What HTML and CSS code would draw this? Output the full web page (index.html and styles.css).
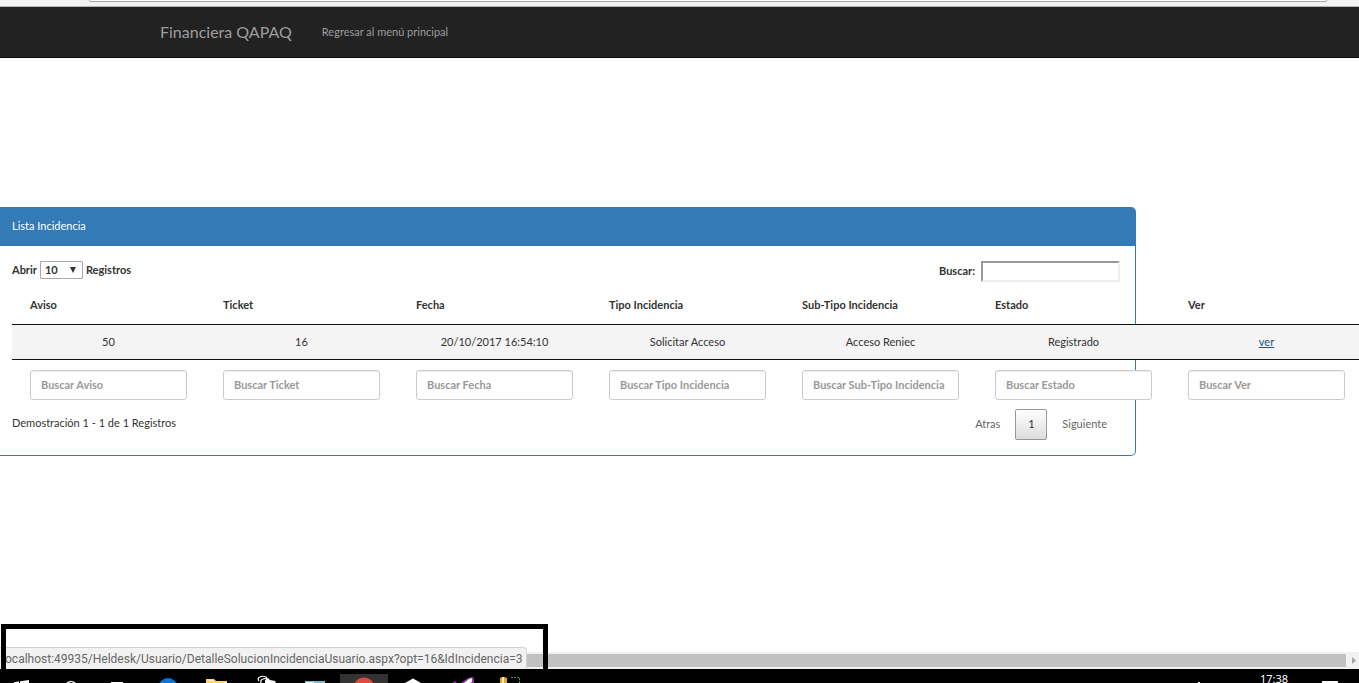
FILE: index.html
```html
<!DOCTYPE html>
<html lang="es">
<head>
<meta charset="utf-8">
<title>Lista Incidencia</title>
<link rel="stylesheet" href="styles.css">
</head>
<body>
<div class="toolbar"><div class="address"></div></div>
<nav class="navbar">
  <a class="brand" href="#">Financiera QAPAQ</a>
  <a class="nav-link" href="#">Regresar al menú principal</a>
</nav>
<main class="content">
  <section class="panel">
    <h1 class="panel-heading">Lista Incidencia</h1>
    <div class="panel-body">
      <div class="controls">
        <label class="length">Abrir
          <span class="select-wrap"><select><option>10</option></select></span>
          Registros</label>
        <label class="search">Buscar: <input type="search"></label>
      </div>
      <table class="grid">
        <thead>
          <tr><th>Aviso</th><th>Ticket</th><th>Fecha</th><th>Tipo Incidencia</th><th>Sub-Tipo Incidencia</th><th>Estado</th><th>Ver</th></tr>
        </thead>
        <tbody>
          <tr><td>50</td><td>16</td><td>20/10/2017 16:54:10</td><td>Solicitar Acceso</td><td>Acceso Reniec</td><td>Registrado</td><td><a href="#">ver</a></td></tr>
        </tbody>
        <tfoot>
          <tr>
            <td><input type="text" placeholder="Buscar Aviso" aria-label="Buscar Aviso"></td>
            <td><input type="text" placeholder="Buscar Ticket" aria-label="Buscar Ticket"></td>
            <td><input type="text" placeholder="Buscar Fecha" aria-label="Buscar Fecha"></td>
            <td><input type="text" placeholder="Buscar Tipo Incidencia" aria-label="Buscar Tipo Incidencia"></td>
            <td><input type="text" placeholder="Buscar Sub-Tipo Incidencia" aria-label="Buscar Sub-Tipo Incidencia"></td>
            <td><input type="text" placeholder="Buscar Estado" aria-label="Buscar Estado"></td>
            <td><input type="text" placeholder="Buscar Ver" aria-label="Buscar Ver"></td>
          </tr>
        </tfoot>
      </table>
      <div class="summary">
        <p class="info">Demostración 1 - 1 de 1 Registros</p>
        <div class="pager">
          <button type="button" class="page">Atras</button>
          <button type="button" class="page current">1</button>
          <button type="button" class="page">Siguiente</button>
        </div>
      </div>
    </div>
  </section>
</main>
<div class="scrollbar">
  <div class="thumb"></div>
  <svg class="arrow" viewBox="0 0 12 17"><path d="M5 5v7l4-3.500z" fill="#a3a3a3"/></svg>
  <div class="callout"></div>
  <div class="status">ocalhost:49935/Heldesk/Usuario/DetalleSolucionIncidenciaUsuario.aspx?opt=16&amp;IdIncidencia=3</div>
  <div class="callout-edge"></div>
</div>
<footer class="taskbar">
  <button class="task first" aria-label="Inicio"><svg viewBox="0 0 48 14"><path d="M17 13.200l5-.900V14h-5zM23 12.200l9-1.200v3h-9z" fill="#fff"/></svg></button>
  <button class="task" aria-label="Buscar"><svg viewBox="0 0 48 14"><circle cx="25" cy="18" r="5.500" fill="none" stroke="#ddd" stroke-width="1.500"/></svg></button>
  <button class="task" aria-label="Vista de tareas"><svg viewBox="0 0 48 14"><path d="M16 13h12v1H16z" fill="#fff"/></svg></button>
  <button class="task" aria-label="Edge"><svg viewBox="0 0 48 14"><circle cx="24" cy="18.500" r="9.500" fill="#0a78d6"/></svg></button>
  <button class="task" aria-label="Explorador"><svg viewBox="0 0 48 14"><path d="M13 10h8l2 2h11v2H13z" fill="#ffd766"/><path d="M16 11h4v1h-4z" fill="#fff3c4"/></svg></button>
  <button class="task" aria-label="Tienda"><svg viewBox="0 0 48 14"><path d="M17 12q-2-3 1-4 3-1.500 6 0l2 3M19 14q-1-3 2-4 2-1 4 0" fill="none" stroke="#fff" stroke-width="1.200"/><path d="M23 11l3-2 2 2 5 1 1 2H23z" fill="#fff"/></svg></button>
  <button class="task" aria-label="Equipo"><svg viewBox="0 0 48 14"><path d="M14 12h20v2H14z" fill="#78bce0"/><path d="M15 13h8v1h-8z" fill="#d9edf7"/></svg></button>
  <button class="task active" aria-label="Chrome"><svg viewBox="0 0 48 14"><circle cx="24" cy="19" r="10.500" fill="#df4b3f"/></svg></button>
  <button class="task" aria-label="Unity"><svg viewBox="0 0 48 14"><path d="M16 14l7-4q1-.800 2 0l7 4z" fill="#fff"/></svg></button>
  <button class="task" aria-label="Visual Studio"><svg viewBox="0 0 48 14"><path d="M14 14l3-2 2 2zM23 14l7-5 5-1 1 2v4z" fill="#8a3aa0"/><path d="M26 14l5-4 3-1v4l-2 1z" fill="#fff"/></svg></button>
  <button class="task" aria-label="SQL Server"><svg viewBox="0 0 48 14"><path d="M13 9q3.500-2 7 0v5h-7z" fill="#e5a51f"/><path d="M15 8h2v6h-2z" fill="#fff0a8"/><path d="M24 8.500h8.500V14" fill="none" stroke="#539540" stroke-dasharray="2 1"/></svg></button>
  <span class="tray"><svg viewBox="0 0 6 14"><path d="M2 13h2v1H2z" fill="#fff"/></svg></span>
  <time class="clock">17:38</time>
  <button class="notify" aria-label="Notificaciones"><svg viewBox="0 0 16 14"><path d="M0 12h16v2H0z" fill="#fff"/></svg></button>
</footer>
</body>
</html>
```
FILE: styles.css
```css
* { box-sizing: border-box; }
body {
  margin: 0;
  height: 100vh;
  display: flex;
  flex-direction: column;
  overflow: hidden;
  background: #fff;
  color: #333;
  font: 11px/20px Lato, sans-serif;
}
button, input, select { font: inherit; color: inherit; }
.toolbar {
  flex: none;
  height: 7px;
  background: #f2f3f2;
  border-bottom: 1px solid #b4b5b4;
}
.address {
  height: 2px;
  margin: 0 32px 0 89px;
  background: #fff;
  border: 1px solid #a9aba9;
  border-top: 0;
  border-radius: 0 0 2px 2px;
}
.navbar {
  flex: none;
  display: flex;
  align-items: center;
  gap: 30px;
  height: 51px;
  padding: 0 160px;
  background: #222;
  border-bottom: 1px solid #080808;
}
.navbar a { color: #9d9d9d; text-decoration: none; }
.navbar .brand { font-size: 16px; }
.content { flex: 1; min-height: 0; padding-top: 149px; }
.panel {
  width: calc(100% - 223px);
  border: 1px solid #337ab7;
  border-left: 0;
  border-radius: 0 5px 5px 0;
}
.panel-heading {
  margin: 0;
  padding: 8px 12px 10px;
  background: #337ab7;
  color: #fff;
  font-size: 11px;
  font-weight: 400;
  border-radius: 0 3px 0 0;
}
.panel-body { padding: 15px 15px 15px 12px; }
.controls {
  display: flex;
  justify-content: space-between;
  height: 26px;
  font-weight: 700;
}
.controls label { display: flex; height: 20px; align-items: center; gap: 3px; }
.length { margin-top: -1px; }
.controls .search { gap: 6px; }
.select-wrap { position: relative; display: flex; }
.select-wrap::after {
  content: "";
  position: absolute;
  right: 7px;
  top: 6px;
  border: 3px solid transparent;
  border-top: 6px solid #333;
  border-bottom: 0;
}
.length select {
  appearance: none;
  width: 43px;
  height: 18px;
  padding: 0 4px;
  background: #fff;
  border: 1px solid #a9a9a9;
  border-radius: 1px;
  line-height: 16px;
}
.search input {
  appearance: none;
  width: 139px;
  height: 21px;
  margin: 0;
  padding: 1px;
  background: #fff;
  border: 2px solid;
  border-color: #999 #eee #eee #999;
}
.grid {
  width: 1351px;
  table-layout: fixed;
  border-collapse: separate;
  border-spacing: 0;
}
.grid th {
  padding: 8px 18px 9px;
  text-align: left;
  font-weight: 700;
  border-bottom: 1px solid #111;
}
.grid tbody td {
  padding: 7px 10px;
  text-align: center;
  background: #f4f4f4;
  border-bottom: 1px solid #111;
}
.grid tbody a { color: #23527c; text-decoration: underline; }
.grid tfoot td { padding: 10px 18px 0; }
.grid tfoot input {
  display: block;
  width: 100%;
  height: 30px;
  padding: 4px 10px 6px;
  background: #fff;
  border: 1px solid #ccc;
  border-radius: 3px;
  box-shadow: inset 0 1px 1px rgba(0, 0, 0, .075);
  font-weight: 700;
}
.grid tfoot input::placeholder { color: #999; opacity: 1; }
.summary { display: flex; justify-content: space-between; padding-top: 9px; }
.info { margin: 0; padding-top: 4px; }
.pager { display: flex; gap: 2px; }
.page {
  height: 31px;
  padding: 0 12px 2px;
  border: 1px solid transparent;
  border-radius: 2px;
  background: none;
  color: #666;
}
.page.current {
  width: 32px;
  color: #333;
  border-color: #979797;
  background: linear-gradient(#fff, #dcdcdc);
}
.scrollbar {
  flex: none;
  position: relative;
  display: flex;
  align-items: center;
  height: 17px;
  background: #f1f1f1;
}
.thumb { flex: 1; height: 13px; background: #c1c1c1; }
.arrow { width: 12px; height: 17px; margin-left: 1px; }
.status {
  position: absolute;
  left: 0;
  bottom: 0;
  height: 22px;
  padding: 0 3px 0 5px;
  background: #f2f2f2;
  border: 1px solid #d4d4d4;
  border-width: 1px 1px 0 0;
  border-radius: 0 4px 0 0;
  color: #666;
  font: 12px/22px Roboto, sans-serif;
  white-space: nowrap;
}
.callout {
  position: absolute;
  left: 1px;
  bottom: 0;
  width: 547px;
  height: 45px;
  border: 5px solid #000;
  border-bottom: 0;
}
.callout-edge {
  position: absolute;
  left: 1px;
  bottom: 0;
  width: 5px;
  height: 45px;
  background: #000;
}
.taskbar {
  flex: none;
  display: flex;
  gap: 1px;
  height: 14px;
  overflow: hidden;
  background: #000;
  color: #fff;
}
.taskbar button { padding: 0; border: 0; background: none; }
.taskbar svg { display: block; height: 14px; }
.task { display: flex; justify-content: flex-end; width: 48px; overflow: hidden; }
.task svg { flex: none; width: 48px; }
.task.first { width: 45px; }
.taskbar .task.active { height: 9px; margin-top: 5px; background: #333; }
.task.active svg { margin-top: -5px; }
.tray { width: 6px; margin-left: auto; margin-right: 57px; }
.clock { font: 11px/20px "Noto Sans", sans-serif; margin-right: 33px; }
.notify { width: 16px; margin-right: 21px; }
```
